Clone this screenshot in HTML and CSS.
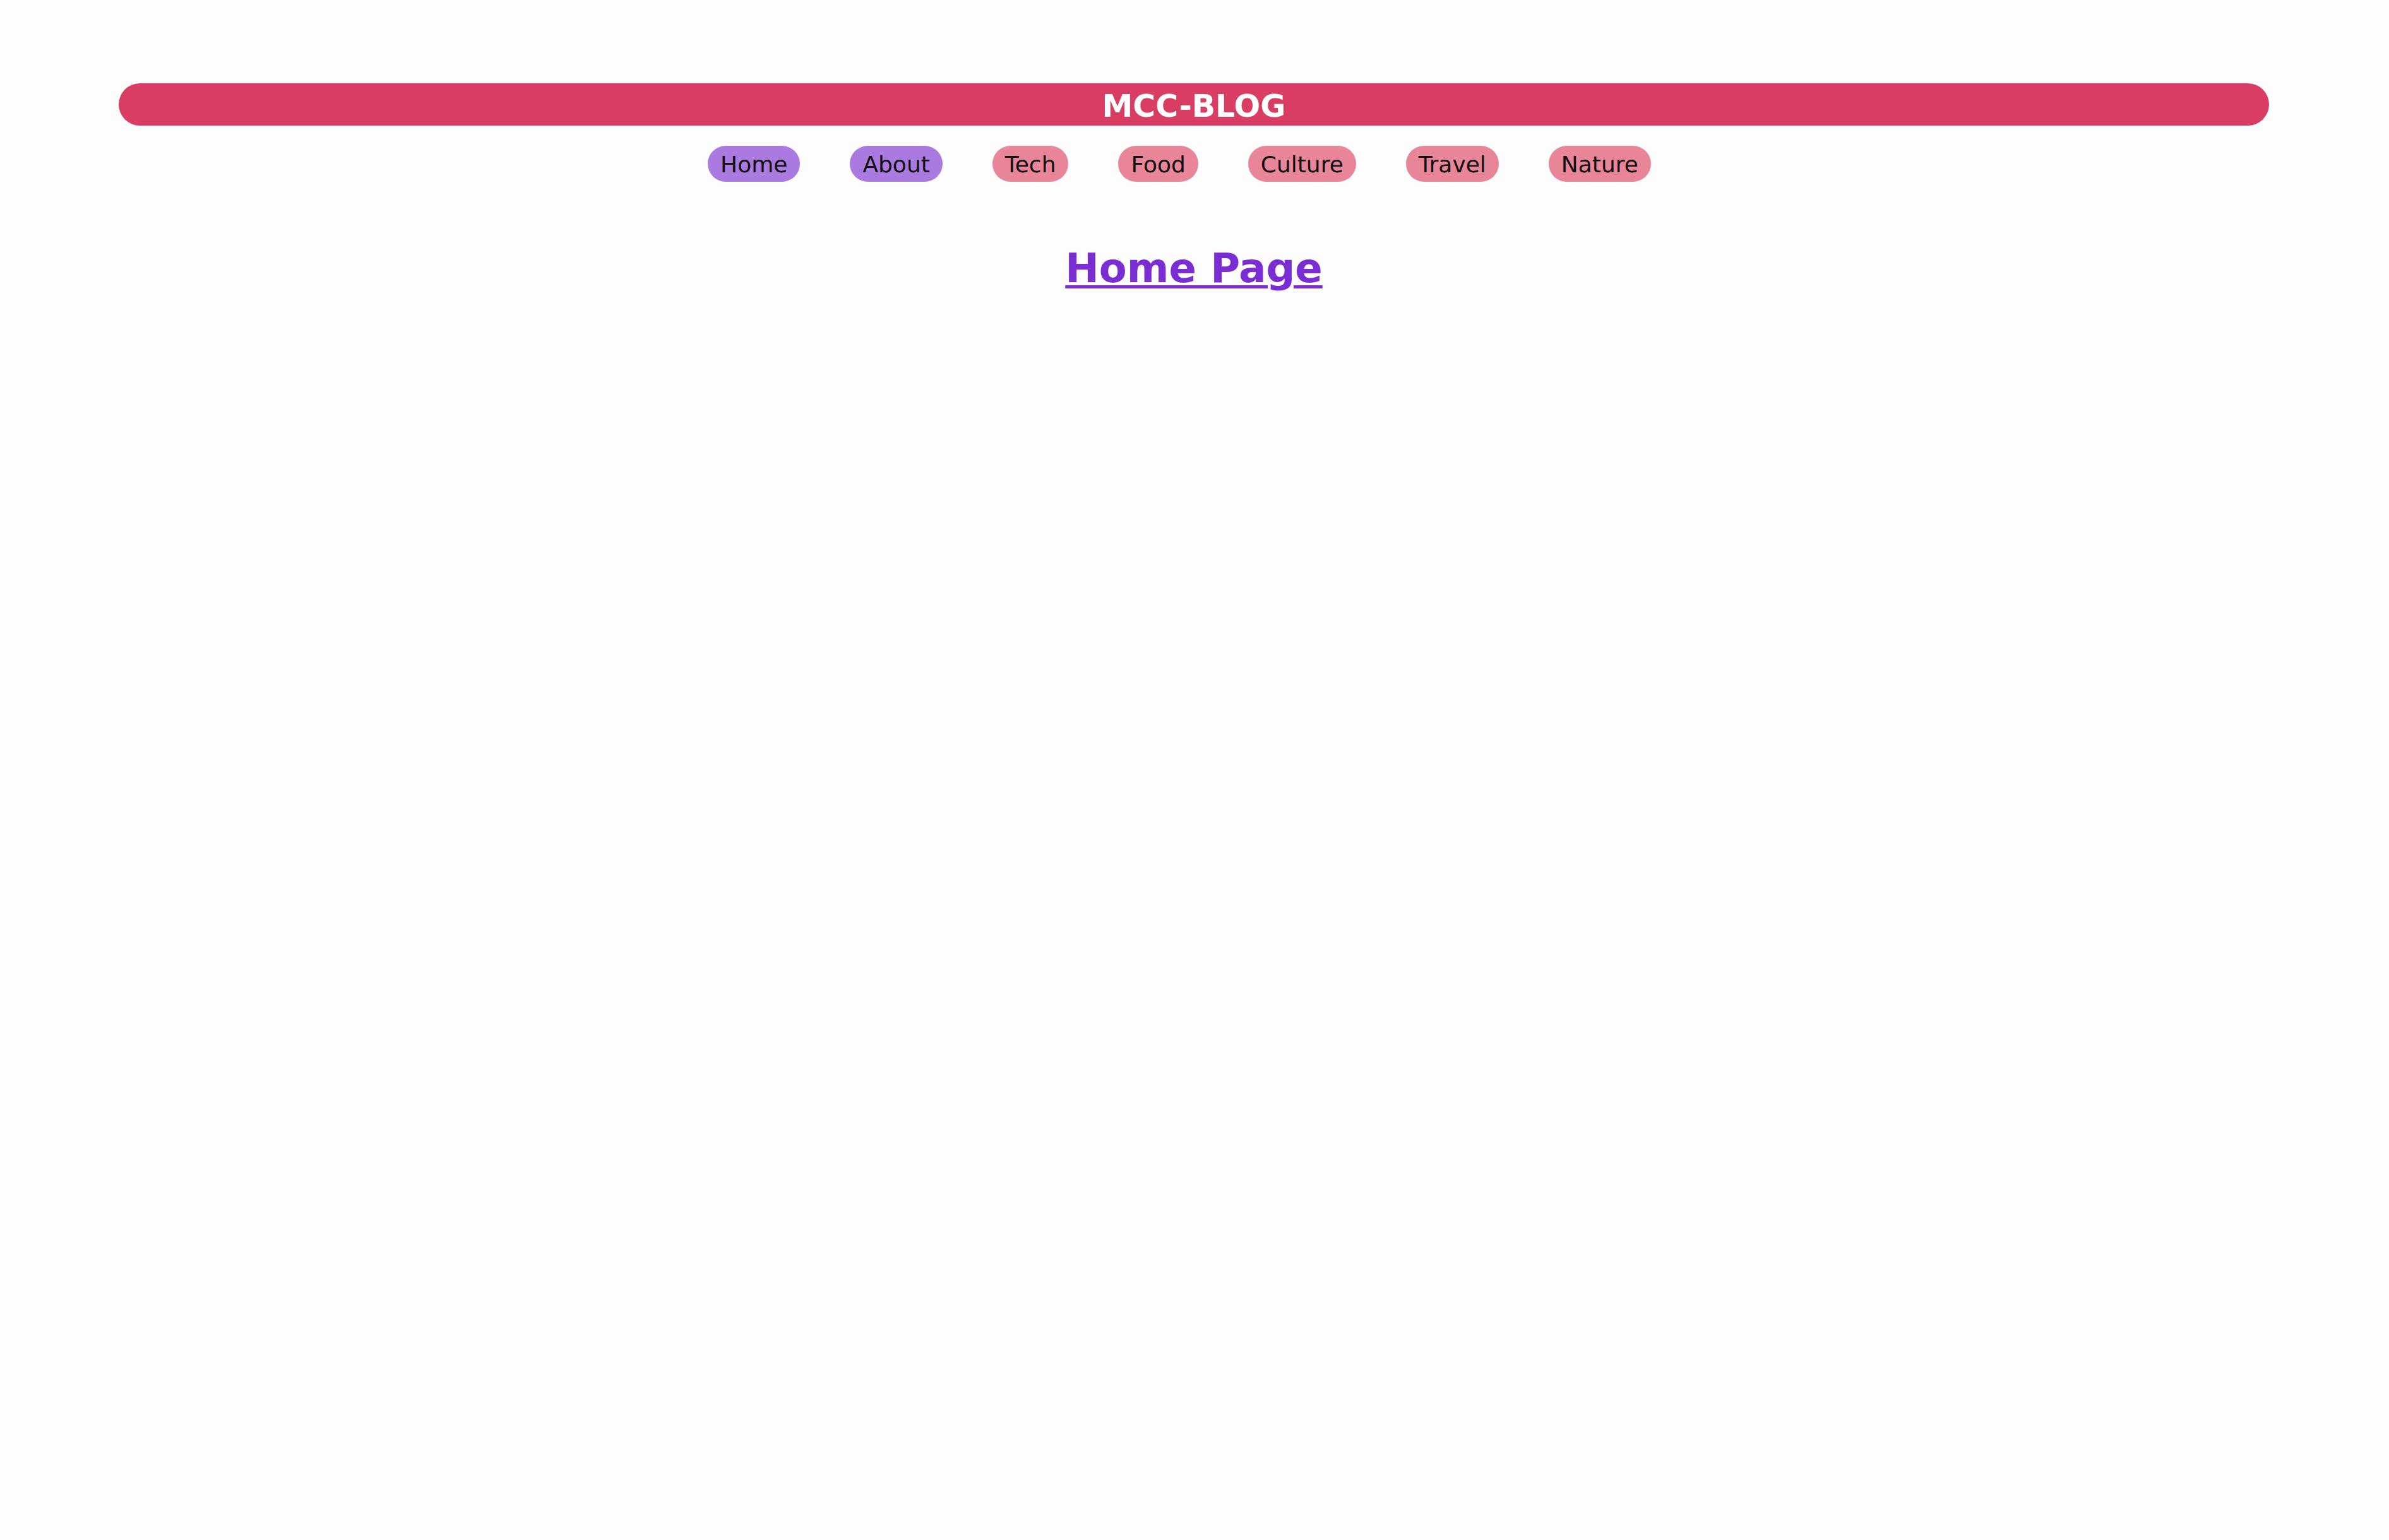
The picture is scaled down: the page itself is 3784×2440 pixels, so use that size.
FILE: index.html
```html
<!DOCTYPE html>
<html lang="en">
<head>
<meta charset="utf-8">
<title>MCC-BLOG</title>
<link rel="stylesheet" href="styles.css">
</head>
<body>
  <header class="site-header">
    <div class="brand">MCC-BLOG</div>
    <nav class="nav">
      <a class="pill pill-purple" href="#">Home</a>
      <a class="pill pill-purple" href="#">About</a>
      <a class="pill pill-pink" href="#">Tech</a>
      <a class="pill pill-pink" href="#">Food</a>
      <a class="pill pill-pink" href="#">Culture</a>
      <a class="pill pill-pink" href="#">Travel</a>
      <a class="pill pill-pink" href="#">Nature</a>
    </nav>
  </header>
  <main class="content">
    <h1 class="page-title"><a href="#">Home Page</a></h1>
  </main>
</body>
</html>
```

FILE: styles.css
```css
html, body {
  margin: 0;
  padding: 0;
}

body {
  background: #fdfdfd;
  font-family: "DejaVu Sans", Verdana, sans-serif;
  padding: 132px 190px 0 188px;
  min-height: 2440px;
  box-sizing: border-box;
}

.site-header {
  display: flex;
  flex-direction: column;
}

.brand {
  background: #d93d63;
  color: #ffffff;
  font-weight: bold;
  font-size: 49px;
  line-height: 56px;
  padding: 9px 0 2px;
  border-radius: 34px;
  text-align: center;
}

.nav {
  display: flex;
  justify-content: center;
  gap: 79px;
  margin-top: 32px;
  padding-right: 46px;
}

.pill {
  display: block;
  font-size: 36px;
  line-height: 42px;
  padding: 9px 20px 6px;
  border-radius: 29px;
  color: #111111;
  text-decoration: none;
}

.pill-purple {
  background: #aa7ae1;
}

.pill-pink {
  background: #e88599;
}

.content {
  display: flex;
  justify-content: center;
}

.page-title {
  margin: 100px 0 0;
  font-size: 64px;
  font-weight: bold;
  line-height: 75px;
}

.page-title a {
  color: #7a2dd2;
  text-decoration: underline;
  text-decoration-thickness: 5px;
  text-underline-offset: 5px;
}
```
